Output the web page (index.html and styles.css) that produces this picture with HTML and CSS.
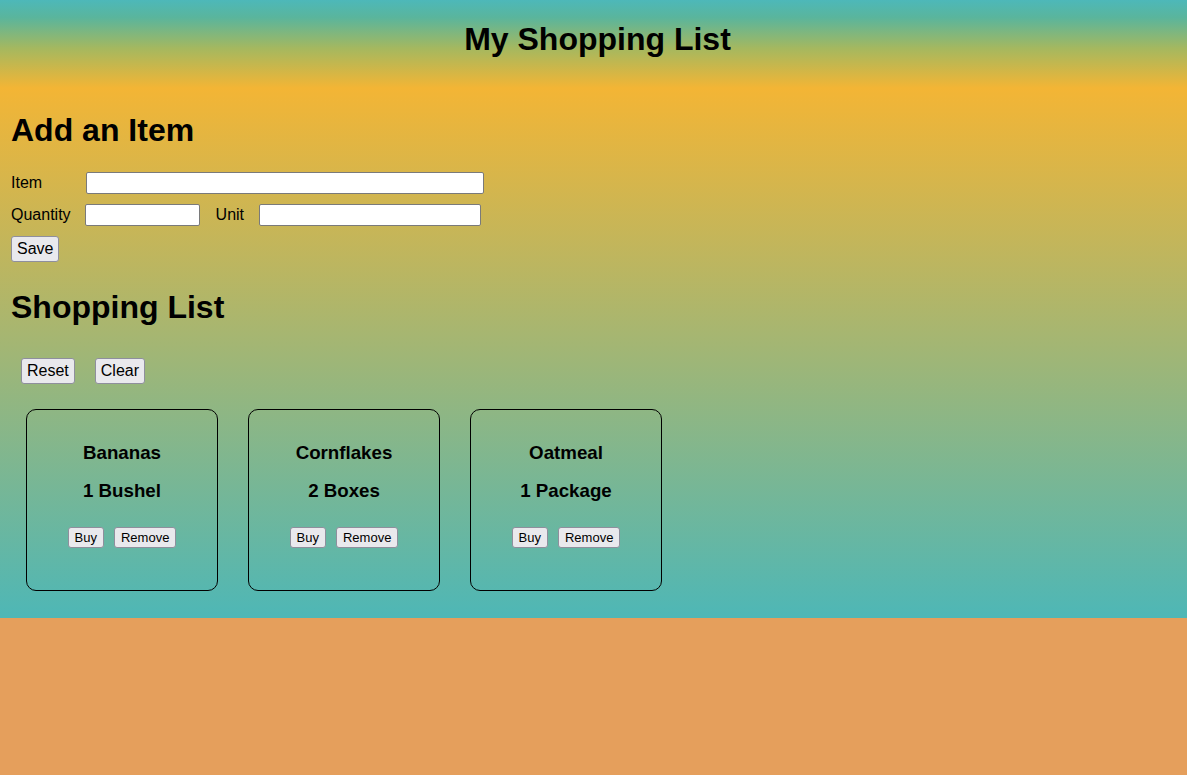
FILE: index.html
```html
<!DOCTYPE html>
<html>
<head>
<meta charset="utf-8">
<title>My Shopping List</title>
<link rel="stylesheet" href="styles.css">
</head>
<body>
<header class="top">
  <h1 class="title">My Shopping List</h1>
</header>
<main class="main">
  <h2 class="section-title first">Add an Item</h2>
  <form class="form">
    <div class="row">
      <label class="lbl lbl-item">Item</label>
      <input class="field field-item" type="text">
    </div>
    <div class="row row-gap">
      <label class="lbl">Quantity</label>
      <input class="field field-qty" type="text">
      <label class="lbl lbl-unit">Unit</label>
      <input class="field field-unit" type="text">
    </div>
    <div class="row">
      <button type="button" class="btn btn-lg">Save</button>
    </div>
  </form>
  <h2 class="section-title second">Shopping List</h2>
  <div class="actions">
    <button type="button" class="btn btn-lg">Reset</button>
    <button type="button" class="btn btn-lg">Clear</button>
  </div>
  <div class="cards">
    <div class="card">
      <h3 class="card-name">Bananas</h3>
      <h3 class="card-qty">1 Bushel</h3>
      <div class="card-btns">
        <button type="button" class="btn btn-sm">Buy</button>
        <button type="button" class="btn btn-sm">Remove</button>
      </div>
    </div>
    <div class="card">
      <h3 class="card-name">Cornflakes</h3>
      <h3 class="card-qty">2 Boxes</h3>
      <div class="card-btns">
        <button type="button" class="btn btn-sm">Buy</button>
        <button type="button" class="btn btn-sm">Remove</button>
      </div>
    </div>
    <div class="card">
      <h3 class="card-name">Oatmeal</h3>
      <h3 class="card-qty">1 Package</h3>
      <div class="card-btns">
        <button type="button" class="btn btn-sm">Buy</button>
        <button type="button" class="btn btn-sm">Remove</button>
      </div>
    </div>
  </div>
</main>
</body>
</html>
```
FILE: styles.css
```css
html {
  background: #e59f5c;
}
body {
  margin: 0;
  height: 618px;
  font-family: "Liberation Sans", Arial, sans-serif;
  color: #000;
  display: flex;
  flex-direction: column;
}
.top {
  height: 88px;
  box-sizing: border-box;
  padding-top: 21px;
  padding-left: 8px;
  background: linear-gradient(to bottom, #4db8b9 0%, #5ab59c 20%, #a5b85f 55%, #f3b535 100%);
}
.title {
  margin: 0;
  text-align: center;
  font-size: 32px;
  line-height: 37px;
  font-weight: bold;
}
.main {
  flex: 1;
  padding: 0 11px;
  background: linear-gradient(to bottom, #f3b535 0%, #4eb7b6 100%);
}
.section-title {
  margin: 0;
  font-size: 32px;
  line-height: 37px;
  font-weight: bold;
}
.section-title.first {
  margin-top: 24px;
}
.section-title.second {
  margin-top: 27px;
}
.form {
  margin-top: 23px;
  display: flex;
  flex-direction: column;
  gap: 10px;
}
.row {
  display: flex;
  align-items: center;
}
.row-gap {
  gap: 14px;
}
.lbl {
  font-size: 16px;
  line-height: 22px;
}
.lbl-item {
  width: 75px;
}
.lbl-unit {
  margin-left: 2px;
  margin-right: 1px;
}
.field {
  box-sizing: border-box;
  height: 22px;
  border: 1px solid #7a7a7a;
  border-radius: 2px;
  background: #fff;
  padding: 0 3px;
  font-family: inherit;
  font-size: 13px;
}
.field-item { width: 398px; }
.field-qty { width: 115px; }
.field-unit { width: 222px; }
.btn {
  font-family: inherit;
  color: #000;
  background: #e9e9ed;
  border: 1px solid #8f8f9d;
  border-radius: 3px;
  box-sizing: border-box;
  cursor: pointer;
}
.btn-lg {
  font-size: 16px;
  height: 26px;
  padding: 0 5px;
}
.actions {
  margin-top: 32px;
  display: flex;
  gap: 20px;
  padding-left: 10px;
}
.cards {
  display: flex;
  gap: 30px;
  padding-left: 15px;
  margin-top: 25px;
}
.card {
  width: 192px;
  height: 182px;
  box-sizing: border-box;
  border: 1px solid #000;
  border-radius: 10px;
  display: flex;
  flex-direction: column;
  align-items: center;
}
.card-name,
.card-qty {
  margin: 0;
  font-size: 18.72px;
  line-height: 22px;
  font-weight: bold;
}
.card-name { margin-top: 32px; }
.card-qty { margin-top: 16px; }
.card-btns {
  margin-top: 25px;
  display: flex;
  gap: 10px;
}
.btn-sm {
  font-size: 13px;
  height: 21px;
  padding: 0 6px;
}
```
